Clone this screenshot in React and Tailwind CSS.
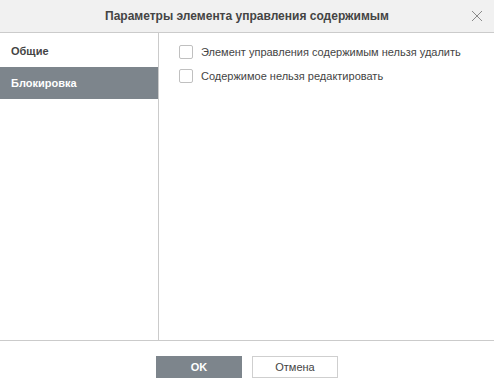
import React, { useState } from "react";

const CheckRow = ({ label, checked, onToggle }) => (
  <label className="flex items-center h-[24px] cursor-pointer select-none">
    <span
      onClick={onToggle}
      className="w-[14px] h-[14px] border border-[#c0c0c0] bg-white rounded-[2px] mr-[8px] flex items-center justify-center"
    >
      {checked && (
        <svg width="10" height="10" viewBox="0 0 10 10">
          <path d="M1.5 5 L4 7.5 L8.5 2.5" fill="none" stroke="#444" strokeWidth="1.5" />
        </svg>
      )}
    </span>
    <span className="text-[11px] text-[#444]">{label}</span>
  </label>
);

const App = () => {
  const [tab, setTab] = useState(1);
  const [lockDelete, setLockDelete] = useState(false);
  const [lockEdit, setLockEdit] = useState(false);

  const tabs = ["Общие", "Блокировка"];

  return (
    <div
      className="w-[494px] h-[387px] flex flex-col bg-white text-[#444]"
      style={{ fontFamily: '"Liberation Sans", Arial, sans-serif' }}
    >
      <div className="h-[33px] shrink-0 bg-[#f1f1f1] border-b border-[#cbcbcb] flex items-center justify-center relative">
        <span className="text-[12px] font-bold text-[#444]">Параметры элемента управления содержимым</span>
        <button className="absolute right-[11px] top-[10px] w-[12px] h-[12px] flex items-center justify-center">
          <svg width="12" height="12" viewBox="0 0 12 12">
            <path d="M1 1 L11 11 M11 1 L1 11" stroke="#8a8a8a" strokeWidth="1" />
          </svg>
        </button>
      </div>

      <div className="flex flex-1 border-b border-[#cbcbcb]">
        <div className="w-[159px] shrink-0 border-r border-[#cbcbcb] pt-[2px]">
          {tabs.map((t, i) => (
            <div
              key={t}
              onClick={() => setTab(i)}
              className={
                "h-[32px] flex items-center pl-[11px] text-[11px] font-bold cursor-pointer " +
                (tab === i ? "bg-[#7d858c] text-white" : "text-[#444]")
              }
            >
              {t}
            </div>
          ))}
        </div>
        <div className="flex-1 pl-[20px] pt-[7px]">
          {tab === 1 && (
            <div className="flex flex-col">
              <CheckRow
                label="Элемент управления содержимым нельзя удалить"
                checked={lockDelete}
                onToggle={() => setLockDelete(!lockDelete)}
              />
              <CheckRow
                label="Содержимое нельзя редактировать"
                checked={lockEdit}
                onToggle={() => setLockEdit(!lockEdit)}
              />
            </div>
          )}
        </div>
      </div>

      <div className="h-[46px] shrink-0 flex items-start justify-center gap-[10px] pt-[15px]">
        <button className="w-[86px] h-[22px] bg-[#7d858c] text-white text-[11px] font-bold">OK</button>
        <button className="w-[86px] h-[22px] bg-white border border-[#cfcfcf] text-[#444] text-[11px]">Отмена</button>
      </div>
    </div>
  );
};

export default App;
